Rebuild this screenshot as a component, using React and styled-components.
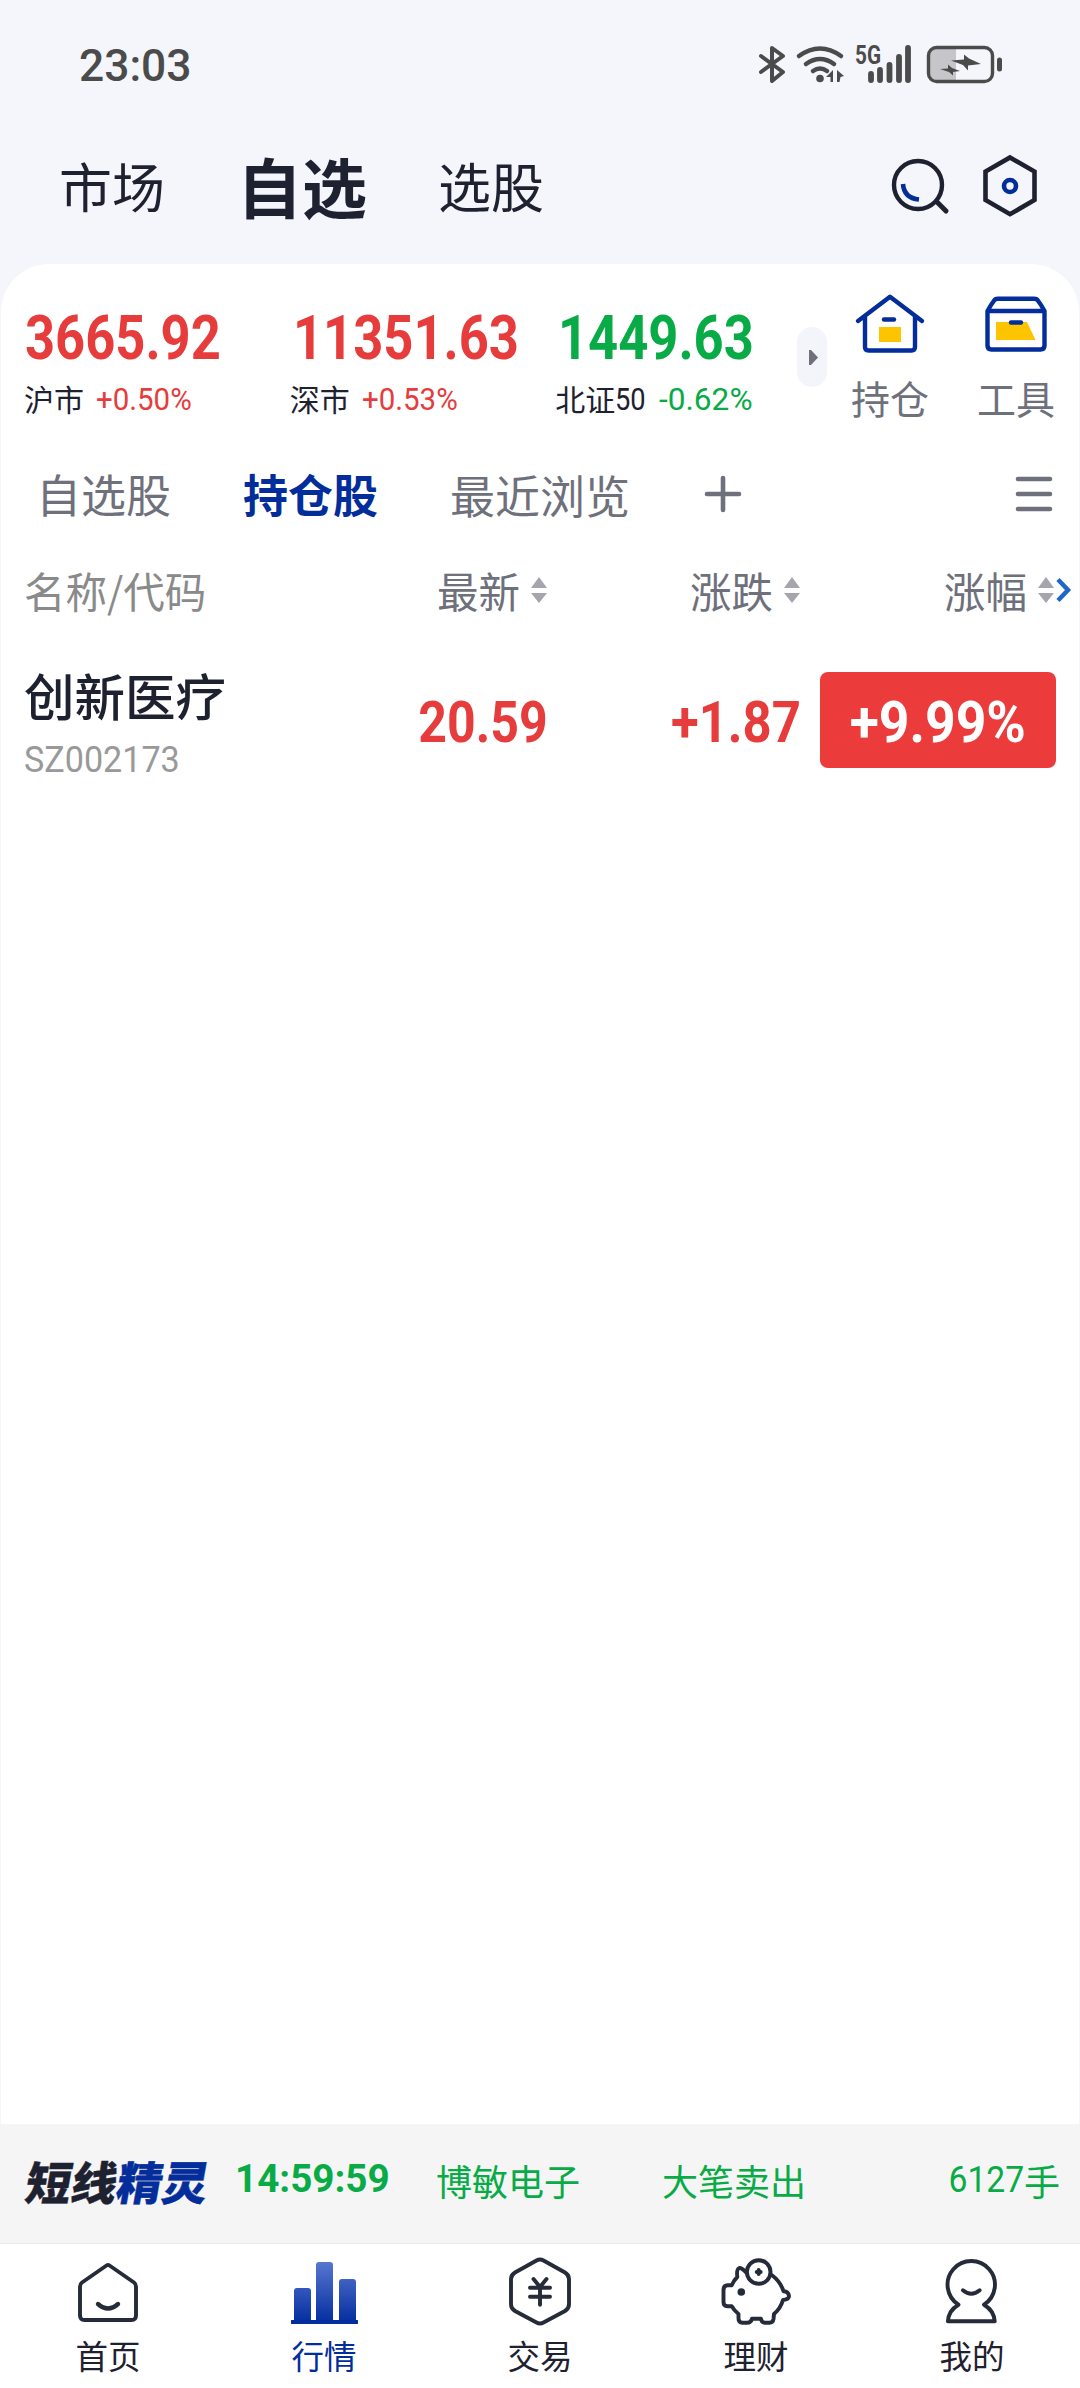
import React from 'react';
import styled, { createGlobalStyle } from 'styled-components';

const RED = '#e63c3c';
const GREEN = '#08ab46';
const INK = '#1e2130';
const GREY = '#6e707b';
const BLUE = '#032d9b';

const CJK = `'Noto Sans CJK SC', sans-serif`;
const NUM = `Roboto, 'Noto Sans CJK SC', sans-serif`;

const GlobalStyle = createGlobalStyle`
  * {
    box-sizing: border-box;
  }
  body {
    margin: 0;
    background: #f4f6fb;
    font-family: ${CJK};
    color: ${INK};
  }
`;

const Screen = styled.div`
  display: flex;
  flex-direction: column;
  width: 1080px;
  height: 2388px;
  overflow: hidden;
  white-space: nowrap;
`;

/* narrow numerals, squeezed toward the side they are aligned to */
const Num = styled.span`
  display: block;
  width: max-content;
  font-family: ${NUM};
  font-size: ${({ $size }) => $size}px;
  font-weight: ${({ $weight }) => $weight || 400};
  line-height: 1;
  color: ${({ $color }) => $color || 'inherit'};
  transform: scaleX(${({ $squeeze }) => $squeeze || 0.9});
  transform-origin: ${({ $origin }) => $origin || 'left'} center;
`;

const StatusBar = styled.div`
  display: flex;
  align-items: center;
  justify-content: space-between;
  height: 130px;
  padding: 0 77px 0 79px;
`;

const StatusIcons = styled.svg`
  width: 244px;
  height: 40px;
  overflow: visible;
`;

const Header = styled.header`
  display: flex;
  align-items: center;
  height: 134px;
  padding: 0 39px 22px 59px;
`;

const HeaderTab = styled.div`
  width: ${({ $width }) => $width}px;
  padding-bottom: 3px;
  font-size: ${({ $active }) => ($active ? 65 : 53)}px;
  font-weight: ${({ $active }) => ($active ? 700 : 400)};
  line-height: 80px;
`;

const HeaderIcon = styled.svg`
  width: 62px;
  height: 64px;
  margin-left: ${({ $gap }) => $gap};
`;

const Card = styled.main`
  display: flex;
  flex-direction: column;
  flex: 1;
  margin: 0 1px;
  background: #fff;
  border-radius: 48px 48px 0 0;
`;

const Indices = styled.section`
  display: flex;
  height: 180px;
  padding-left: 23px;
`;

const Index = styled.div`
  width: 266px;
  padding-top: 44px;
`;

const IndexValue = styled.div`
  padding-left: ${({ $indent }) => $indent || 1}px;
`;

const IndexFoot = styled.div`
  display: flex;
  align-items: center;
  gap: 14px;
  height: 40px;
  margin-top: 10px;
  font-size: 30px;
`;

const IndexName = styled.div`
  display: flex;
  align-items: center;
  width: ${({ $width }) => $width}px;
  margin-top: -2px;
  line-height: 40px;

  span {
    margin-top: 2px;
  }
`;

const Pill = styled.div`
  display: flex;
  align-items: center;
  justify-content: center;
  width: 30px;
  height: 60px;
  margin: 63px 0 0 -24px;
  padding-left: 2px;
  border-radius: 15px;
  background: #f4f5fa;
`;

const Shortcuts = styled.div`
  display: flex;
`;

const Shortcut = styled.div`
  display: flex;
  flex-direction: column;
  align-items: center;
  width: 126px;
  padding-top: 26px;
  font-size: 39px;
  line-height: 50px;
  color: ${GREY};
`;

const ShortcutIcon = styled.svg`
  width: 72px;
  height: 72px;
  margin-bottom: 10px;
`;

const Groups = styled.nav`
  display: flex;
  align-items: center;
  height: 99px;
  padding: 0 25px 0 35px;
`;

const Group = styled.div`
  width: ${({ $width }) => $width}px;
  padding-top: ${({ $drop }) => $drop || 0}px;
  font-size: 45px;
  font-weight: ${({ $active }) => ($active ? 700 : 400)};
  color: ${({ $active }) => ($active ? BLUE : GREY)};
  line-height: 60px;
`;

const LineIcon = styled.svg`
  width: 40px;
  height: 40px;
  fill: none;
  stroke: ${GREY};
  stroke-width: 4.6;
  stroke-linecap: round;
  margin-left: ${({ $push }) => ($push ? 'auto' : '-1px')};
`;

const Columns = styled.div`
  display: grid;
  grid-template-columns: 323px 201px 253px 254px 20px;
  align-items: center;
  height: 94px;
  padding-left: 23px;
  font-size: 41.5px;
  line-height: 60px;
  color: ${GREY};
`;

const NameColumn = styled.div`
  color: #8a8a8a;
`;

const SortColumn = styled.div`
  display: flex;
  align-items: center;
  justify-content: flex-end;
  gap: 10px;
`;

const Stock = styled.div`
  display: grid;
  grid-template-columns: 323px 201px 253px 19px 236px;
  align-items: center;
  height: 166px;
  padding-left: 23px;
`;

const StockName = styled.div`
  margin-bottom: 14px;
  font-size: 50.5px;
  font-weight: 500;
  line-height: 66px;
`;

const Price = styled.div`
  display: flex;
  justify-content: flex-end;
  padding-top: 6px;
`;

const Badge = styled.div`
  display: flex;
  align-items: center;
  justify-content: center;
  grid-column: 5;
  height: 96px;
  padding-top: 6px;
  border-radius: 8px;
  background: #eb3b3b;
`;

const Ticker = styled.section`
  display: flex;
  align-items: center;
  height: 120px;
  padding: 0 20px 8px 27px;
  border-bottom: 1px solid #e9e9e9;
  background: #f5f5f5;
  font-size: 36px;
  color: ${GREEN};
`;

const Brand = styled.div`
  width: 208px;
  font-size: 45.5px;
  font-weight: 900;
  line-height: 50px;
  color: ${INK};
  -webkit-text-stroke: 0.4px currentColor;
  transform: skewX(-10deg);

  em {
    font-style: normal;
    color: ${BLUE};
  }
`;

const TickerCell = styled.div`
  display: flex;
  align-items: center;
  width: ${({ $width }) => $width};
  margin-left: ${({ $push }) => ($push ? 'auto' : 0)};
  line-height: 50px;
`;

const TabBar = styled.footer`
  display: grid;
  grid-template-columns: repeat(5, 216px);
  height: 144px;
  background: #fff;
`;

const Tab = styled.div`
  display: flex;
  flex-direction: column;
  align-items: center;
  padding-top: 9px;
  font-size: 32.5px;
  line-height: 48px;
  color: ${({ $active }) => ($active ? BLUE : INK)};
`;

const TabIcon = styled.svg`
  width: 76px;
  height: 76px;
  margin-bottom: 2px;
  fill: none;
  stroke: #252b38;
  stroke-width: 3.9;
  stroke-linecap: round;
  stroke-linejoin: round;
`;

const Sort = () => (
  <svg width="18" height="28" viewBox="0 0 18 28" fill="#a5a6ad">
    <path d="M9 1l8 11H1zM9 27l8-10H1z" />
  </svg>
);

const indices = [
  { name: '沪市', value: '3665.92', change: '+0.50%', color: RED, width: 58, squeeze: 0.95 },
  { name: '深市', value: '11351.63', change: '+0.53%', color: RED, width: 58, squeeze: 0.95, indent: 3 },
  { name: '北证', code: '50', value: '1449.63', change: '-0.62%', color: GREEN, width: 90, squeeze: 1.02, indent: 3 },
];

const tabs = [
  {
    label: '首页',
    icon: (
      <>
        <path d="M36.500 12.500Q38 11.500 39.500 12.500L64 29.500Q66 31 66 33.500V62.500Q66 67 61.500 67H14.500Q10 67 10 62.500V33.500Q10 31 12 29.500Z" />
        <path d="M28 51q10 9 20 0" strokeWidth="4.400" />
      </>
    ),
  },
  {
    label: '行情',
    active: true,
    icon: (
      <>
        <defs>
          <linearGradient id="bars" gradientUnits="userSpaceOnUse" x1="0" y1="8" x2="0" y2="70">
            <stop offset="0" stopColor="#5877d1" />
            <stop offset="1" stopColor="#032d9f" />
          </linearGradient>
        </defs>
        <path
          d="M8 69V38q0-3 3-3h11q3 0 3 3V69zM30 69V12q0-3 3-3h11q3 0 3 3V69zM53 69V29q0-3 3-3h11q3 0 3 3V69z"
          fill="url(#bars)"
          stroke="none"
        />
        <path d="M7 69h63" stroke="#032d9f" strokeLinecap="square" />
      </>
    ),
  },
  {
    label: '交易',
    icon: (
      <>
        <path d="M34.500 7.500Q38 5.500 41.500 7.500L63 19.500Q67 22 67 26V51.500Q67 55.500 63 58L41.500 69.500Q38 71.500 34.500 69.500L13 58Q9 55.500 9 51.500V26Q9 22 13 19.500Z" />
        <path d="M31.500 26l6.500 8 6.500-8M28 34.800h20M28 43.800h20M38 34.800v17" />
      </>
    ),
  },
  {
    label: '理财',
    icon: (
      <>
        <circle cx="40.700" cy="19" r="11.800" />
        <path d="M40.700 17v4M38.700 19h4" />
        <path d="M28 19.300Q23.500 14.500 21.300 15Q18.300 16 19.300 24Q16 27 13.700 32.300H9.500Q5.500 32.500 5.500 37V49Q5.500 53.200 9.500 53.200H13.700Q16 57.500 20.500 61V65.500Q20.500 69.700 24.500 69.700H29Q33 69.700 34 65.700H43Q43.500 69.700 47 69.700H51.500Q55 69.700 55.500 66L56 61Q62.500 55.500 65 47Q71 46.500 71 43Q70.500 38.500 65.500 38.300Q62.500 28.500 53.700 22" />
        <circle cx="23.300" cy="39" r="3.800" fill="#252b38" stroke="none" />
      </>
    ),
  },
  {
    label: '我的',
    icon: (
      <>
        <path d="M24.500 51.700A23.700 23.700 0 1 1 50 51.700Q60 57.500 60.700 68.300H13.900Q14.500 57.500 24.500 51.700Z" />
        <path d="M28.900 37.300q8.400 7 16.800 0" />
      </>
    ),
  },
];

const App = () => {
  return (
    <>
      <GlobalStyle />
      <Screen>
        <StatusBar>
          <Num $size={45} $weight={500} $color="#4b4b4b" $squeeze={0.985}>23:03</Num>
          <StatusIcons viewBox="760 45 244 40">
            <g fill="none" stroke="#4b4b4b" strokeWidth="4" strokeLinecap="round" strokeLinejoin="round">
              <path d="M762 56l22 16-11 9V48l11 8-22 16" />
              <path d="M800 56q21-15 42 0M807 64q14-10 28 0M814 71q7-5 14 0" strokeWidth="4.600" />
            </g>
            <circle cx="821" cy="78.500" r="3.800" fill="#4b4b4b" />
            <path d="M827 77l7-7v12h-2.500v-5zM838 70l7 6-3.500 1-1 5H838z" fill="#4b4b4b" />
            <text x="856" y="64" fontFamily="Roboto" fontSize="25" fontWeight="700" fill="#4b4b4b" textLength="26" lengthAdjust="spacingAndGlyphs">5G</text>
            <path d="M872 74v6M881 70v10M890.500 65v15M900 57v23M909 48v32" stroke="#4b4b4b" strokeWidth="5.800" strokeLinecap="round" />
            <path d="M938 49h19v31h-19q-7 0-7-7V56q0-7 7-7z" fill="#c5c5ca" />
            <rect x="929.500" y="47.500" width="64" height="34" rx="8" fill="none" stroke="#4b4b4b" strokeWidth="3.400" />
            <path d="M1000.500 60v9" stroke="#4b4b4b" strokeWidth="5" strokeLinecap="round" />
            <path d="M952 60.500l13-1v-5l5 4 12 5.500-13 1.500v5l-5-5.500zM941 69l8-.5v-4l4 3.500 8 3-7 1v3.500l-4-3.500z" fill="#4b4b4b" />
          </StatusIcons>
        </StatusBar>

        <Header>
          <HeaderTab $width={178}>市场</HeaderTab>
          <HeaderTab $width={201} $active>自选</HeaderTab>
          <HeaderTab>选股</HeaderTab>
          <HeaderIcon $gap="auto" viewBox="890 154 62 64" fill="none" strokeLinecap="round">
            <circle cx="919" cy="185" r="24" stroke={INK} strokeWidth="4.400" />
            <path d="M938 202l9 9" stroke={INK} strokeWidth="5" />
            <path d="M904 184q1 14 16 15.500" stroke={BLUE} strokeWidth="4.600" strokeLinecap="butt" />
          </HeaderIcon>
          <HeaderIcon $gap="28px" viewBox="980 154 62 64" fill="none">
            <path d="M1011 157.500l24.500 14v28.500l-24.500 14.200-24.500-14.200v-28.500z" stroke={INK} strokeWidth="4.600" />
            <circle cx="1011" cy="186" r="6" stroke={BLUE} strokeWidth="4.600" />
          </HeaderIcon>
        </Header>

        <Card>
          <Indices>
            {indices.map(({ name, code, value, change, color, width, squeeze, indent }) => (
              <Index key={name}>
                <IndexValue $indent={indent}>
                  <Num $size={61} $weight={700} $color={color} $squeeze={0.86}>{value}</Num>
                </IndexValue>
                <IndexFoot>
                  <IndexName $width={width}>
                    {name}
                    {code && <Num $size={31} $squeeze={0.88}>{code}</Num>}
                  </IndexName>
                  <Num $size={31} $color={color} $squeeze={squeeze}>{change}</Num>
                </IndexFoot>
              </Index>
            ))}
            <Pill>
              <svg width="9" height="15" viewBox="0 0 9 15" fill={GREY}>
                <path d="M0 0h2l7 7.500-7 7.500H0z" />
              </svg>
            </Pill>
            <Shortcuts>
              <Shortcut>
                <ShortcutIcon viewBox="855 290 72 72" fill="none" stroke={BLUE} strokeWidth="4.400" strokeLinecap="round" strokeLinejoin="round">
                  <path d="M859 321l32-24.200 32 24.200M866 317v30q0 3.500 3.500 3.500h43q3.500 0 3.500-3.500v-30" />
                  <path d="M880 327h22v15h-22z" fill="#ffc400" stroke="none" />
                  <path d="M885 319.500h10" />
                </ShortcutIcon>
                持仓
              </Shortcut>
              <Shortcut>
                <ShortcutIcon viewBox="981 290 72 72" fill="none" stroke={BLUE} strokeWidth="4.400" strokeLinecap="round" strokeLinejoin="round">
                  <path d="M988.500 311v34.500q0 4 4 4h49q4 0 4-4V311q-3.500-6.500-7-11-1-1.200-3-1.200h-37q-2 0-3 1.200-3.500 4.500-7 11zh57" />
                  <path d="M997 322h31l8.500 18H997z" fill="#ffc400" stroke="none" />
                  <path d="M1012 322.500h10" />
                </ShortcutIcon>
                工具
              </Shortcut>
            </Shortcuts>
          </Indices>

          <Groups>
            <Group $width={207}>自选股</Group>
            <Group $width={207} $active>持仓股</Group>
            <Group $width={254} $drop={3}>最近浏览</Group>
            <LineIcon viewBox="0 0 40 40">
              <path d="M20 4v32M4 20h32" />
            </LineIcon>
            <LineIcon $push viewBox="0 0 40 40">
              <path d="M4 5h32M4 20h32M4 35h32" />
            </LineIcon>
          </Groups>

          <Columns>
            <NameColumn>名称/代码</NameColumn>
            {['最新', '涨跌', '涨幅'].map((label) => (
              <SortColumn key={label}>
                {label}
                <Sort />
              </SortColumn>
            ))}
            <svg width="18" height="28" viewBox="0 0 18 28" fill="none" stroke="#1f66c8" strokeWidth="4.500">
              <path d="M3 3.500l10 10.500L3 24.500" />
            </svg>
          </Columns>

          <Stock>
            <div>
              <StockName>创新医疗</StockName>
              <Num $size={37.5} $color="#999" $squeeze={0.91}>SZ002173</Num>
            </div>
            <Price>
              <Num $size={57.5} $weight={700} $color={RED} $squeeze={0.87} $origin="right">20.59</Num>
            </Price>
            <Price>
              <Num $size={57.5} $weight={700} $color={RED} $squeeze={0.885} $origin="right">+1.87</Num>
            </Price>
            <Badge>
              <Num $size={57.5} $weight={700} $color="#fff" $squeeze={0.93} $origin="center">+9.99%</Num>
            </Badge>
          </Stock>
        </Card>

        <Ticker>
          <Brand>
            短线<em>精灵</em>
          </Brand>
          <TickerCell $width="201px">
            <Num $size={39} $weight={700} $squeeze={0.99}>14:59:59</Num>
          </TickerCell>
          <TickerCell $width="226px">博敏电子</TickerCell>
          <TickerCell>大笔卖出</TickerCell>
          <TickerCell $push>
            <Num $size={37} $squeeze={0.91} $origin="right">6127</Num>
            手
          </TickerCell>
        </Ticker>

        <TabBar>
          {tabs.map(({ label, icon, active }) => (
            <Tab key={label} $active={active}>
              <TabIcon viewBox="0 0 76 76">{icon}</TabIcon>
              {label}
            </Tab>
          ))}
        </TabBar>
      </Screen>
    </>
  );
};

export default App;
